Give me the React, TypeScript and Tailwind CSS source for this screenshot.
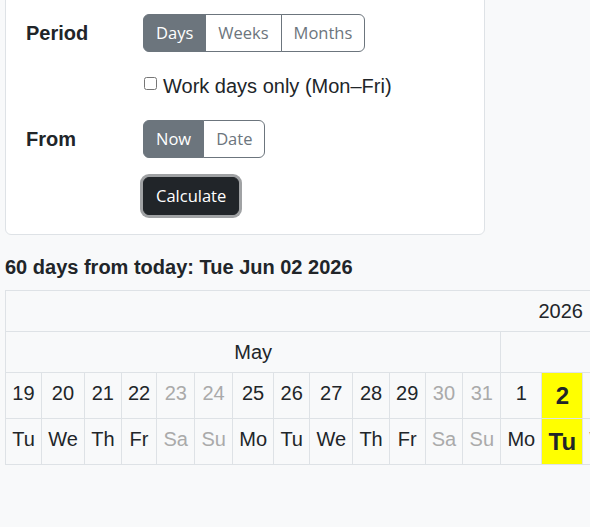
import React from 'react';

const dayNames = ['Su', 'Mo', 'Tu', 'We', 'Th', 'Fr', 'Sa'];

function buildDays() {
  const out: { date: number; month: number; name: string; weekend: boolean; target: boolean }[] = [];
  for (let i = 0; i < 29; i++) {
    const d = new Date(2026, 4, 19 + i);
    const wd = d.getDay();
    out.push({
      date: d.getDate(),
      month: d.getMonth(),
      name: dayNames[wd],
      weekend: wd === 0 || wd === 6,
      target: d.getMonth() === 5 && d.getDate() === 2,
    });
  }
  return out;
}

function ButtonGroup({ items, active }: { items: string[]; active: number }) {
  return (
    <div className="flex">
      {items.map((label, idx) => (
        <button
          key={label}
          className={`border border-[#6c757d] px-3 py-[6px] text-[16.5px] leading-6 font-['Open_Sans',sans-serif]
            ${idx > 0 ? '-ml-px' : ''}
            ${idx === 0 ? 'rounded-l-md' : ''}
            ${idx === items.length - 1 ? 'rounded-r-md' : ''}
            ${idx === active ? 'bg-[#6c757d] text-white' : 'bg-white text-[#6c757d]'}`}
        >
          {label}
        </button>
      ))}
    </div>
  );
}

export default function App() {
  const days = buildDays();
  const mayCount = days.filter((d) => d.month === 4).length;
  const junCount = days.length - mayCount;
  const cell = 'border border-[#dee2e6] px-[6.2px] py-[9px] align-top text-center';

  return (
    <div className="min-h-screen overflow-hidden bg-[#f8f9fa] px-[5px] font-['Liberation_Sans',Arial,sans-serif] text-[#212529]">
      {/* Form card */}
      <div className="-mt-[6px] w-[480px] rounded-md border border-[#dee2e6] bg-white px-5 py-[19px]">
        <div className="grid grid-cols-[117px_auto] items-center gap-y-[19px]">
          <div className="text-[20px] font-bold">Period</div>
          <div>
            <ButtonGroup items={['Days', 'Weeks', 'Months']} active={0} />
          </div>

          <div />
          <label className="flex h-[30px] items-start">
            <input type="checkbox" className="m-0 mt-[6px] ml-px mr-[6px] h-[13px] w-[13px]" />
            <span className="text-[20px] leading-[30px]">Work days only (Mon–Fri)</span>
          </label>

          <div className="text-[20px] font-bold">From</div>
          <div>
            <ButtonGroup items={['Now', 'Date']} active={0} />
          </div>

          <div />
          <div>
            <button className="rounded-md border border-[#212529] bg-[#212529] px-3 py-[6px] text-[16.5px] leading-6 text-white shadow-[0_0_0_3px_#a0a2a4] font-['Open_Sans',sans-serif]">
              Calculate
            </button>
          </div>
        </div>
      </div>

      <h5 className="mt-5 mb-[11px] text-[20px] font-bold leading-[1.2]">
        60 days from today: Tue Jun 02 2026
      </h5>

      {/* Calendar strip */}
      <table className="border-collapse whitespace-nowrap text-[20px] leading-[22px]">
        <tbody>
          <tr>
            <td colSpan={days.length} className={cell}>2026</td>
          </tr>
          <tr>
            <td colSpan={mayCount} className={cell}>May</td>
            <td colSpan={junCount} className={cell}>June</td>
          </tr>
          <tr>
            {days.map((d) => (
              <td
                key={`n${d.month}-${d.date}`}
                className={`${cell} ${d.target ? 'bg-[#ffff00] text-[24px] leading-[27px] font-bold' : ''} ${d.weekend ? 'text-[#aaa]' : ''}`}
              >
                {d.date}
              </td>
            ))}
          </tr>
          <tr>
            {days.map((d) => (
              <td
                key={`w${d.month}-${d.date}`}
                className={`${cell} ${d.target ? 'bg-[#ffff00] text-[24px] leading-[27px] font-bold' : ''} ${d.weekend ? 'text-[#aaa]' : ''}`}
              >
                {d.name}
              </td>
            ))}
          </tr>
        </tbody>
      </table>
    </div>
  );
}
